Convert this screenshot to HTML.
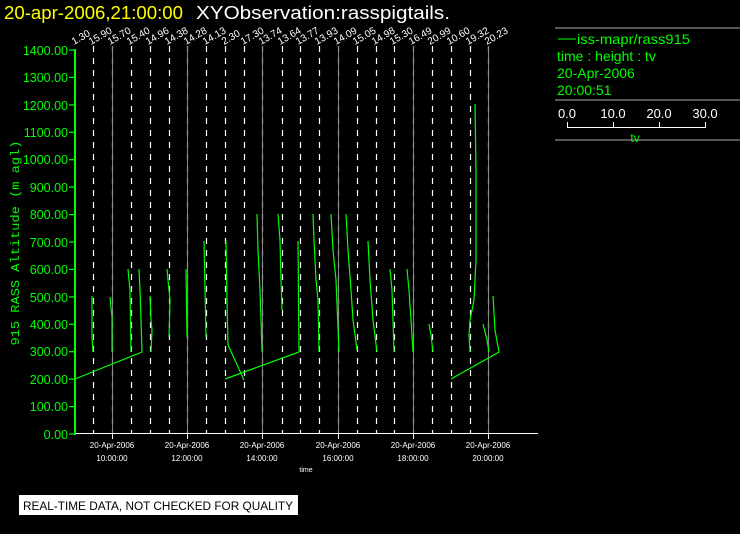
<!DOCTYPE html>
<html><head><style>
html,body{margin:0;padding:0;background:#000;}
body{width:740px;height:534px;overflow:hidden;position:relative;font-family:"Liberation Sans",sans-serif;}
</style></head><body>
<svg width="740" height="534" viewBox="0 0 740 534" xmlns="http://www.w3.org/2000/svg" style="position:absolute;left:0;top:0">
<text x="4" y="19" fill="#ffff00" font-size="18" font-family="Liberation Sans" textLength="179" lengthAdjust="spacingAndGlyphs">20-apr-2006,21:00:00</text>
<text x="196" y="19" fill="#fff" font-size="18" font-family="Liberation Sans" textLength="254" lengthAdjust="spacingAndGlyphs">XYObservation:rasspigtails.</text>

<g stroke="#fff" stroke-width="1.2" stroke-dasharray="6,6">
<line x1="93.5" y1="46" x2="93.5" y2="433"/><line x1="131.5" y1="46" x2="131.5" y2="433"/>
<line x1="150.5" y1="46" x2="150.5" y2="433"/><line x1="169.5" y1="46" x2="169.5" y2="433"/>
<line x1="206.5" y1="46" x2="206.5" y2="433"/><line x1="225.5" y1="46" x2="225.5" y2="433"/>
<line x1="244.5" y1="46" x2="244.5" y2="433"/><line x1="282.5" y1="46" x2="282.5" y2="433"/>
<line x1="300.5" y1="46" x2="300.5" y2="433"/><line x1="319.5" y1="46" x2="319.5" y2="433"/>
<line x1="357.5" y1="46" x2="357.5" y2="433"/><line x1="376.5" y1="46" x2="376.5" y2="433"/>
<line x1="394.5" y1="46" x2="394.5" y2="433"/><line x1="432.5" y1="46" x2="432.5" y2="433"/>
<line x1="451.5" y1="46" x2="451.5" y2="433"/><line x1="470.5" y1="46" x2="470.5" y2="433"/>
<line x1="112.5" y1="46" x2="112.5" y2="433"/><line x1="187.5" y1="46" x2="187.5" y2="433"/>
<line x1="262.5" y1="46" x2="262.5" y2="433"/><line x1="338.5" y1="46" x2="338.5" y2="433"/>
<line x1="413.5" y1="46" x2="413.5" y2="433"/><line x1="488.5" y1="46" x2="488.5" y2="433"/>
</g>
<g stroke="#888" stroke-width="1">
<line x1="112.5" y1="46" x2="112.5" y2="433"/><line x1="187.5" y1="46" x2="187.5" y2="433"/>
<line x1="262.5" y1="46" x2="262.5" y2="433"/><line x1="338.5" y1="46" x2="338.5" y2="433"/>
<line x1="413.5" y1="46" x2="413.5" y2="433"/><line x1="488.5" y1="46" x2="488.5" y2="433"/>
</g>

<g fill="#fff" font-size="10" font-family="Liberation Sans">
<text transform="translate(74,45) rotate(-30)">1.30</text>
<text transform="translate(91,45) rotate(-30)">15.90</text>
<text transform="translate(110,45) rotate(-30)">15.70</text>
<text transform="translate(129,45) rotate(-30)">15.40</text>
<text transform="translate(148,45) rotate(-30)">14.96</text>
<text transform="translate(167,45) rotate(-30)">14.38</text>
<text transform="translate(186,45) rotate(-30)">14.28</text>
<text transform="translate(205,45) rotate(-30)">14.13</text>
<text transform="translate(224,45) rotate(-30)">2.30</text>
<text transform="translate(243,45) rotate(-30)">17.30</text>
<text transform="translate(261,45) rotate(-30)">13.74</text>
<text transform="translate(280,45) rotate(-30)">13.64</text>
<text transform="translate(298,45) rotate(-30)">13.77</text>
<text transform="translate(317,45) rotate(-30)">13.93</text>
<text transform="translate(336,45) rotate(-30)">14.09</text>
<text transform="translate(355,45) rotate(-30)">15.05</text>
<text transform="translate(374,45) rotate(-30)">14.98</text>
<text transform="translate(392,45) rotate(-30)">15.30</text>
<text transform="translate(411,45) rotate(-30)">16.49</text>
<text transform="translate(430,45) rotate(-30)">20.99</text>
<text transform="translate(449,45) rotate(-30)">10.60</text>
<text transform="translate(468,45) rotate(-30)">19.32</text>
<text transform="translate(487,45) rotate(-30)">20.23</text>
</g>

<line x1="75" y1="433.5" x2="538" y2="433.5" stroke="#fff" stroke-width="1"/>
<g stroke="#fff" stroke-width="1">
<line x1="112.5" y1="433" x2="112.5" y2="439"/><line x1="187.5" y1="433" x2="187.5" y2="439"/>
<line x1="262.5" y1="433" x2="262.5" y2="439"/><line x1="338.5" y1="433" x2="338.5" y2="439"/>
<line x1="413.5" y1="433" x2="413.5" y2="439"/><line x1="488.5" y1="433" x2="488.5" y2="439"/>
</g>
<g fill="#fff" font-size="8" font-family="Liberation Sans" text-anchor="middle">
<text x="112" y="448">20-Apr-2006</text><text x="112" y="461">10:00:00</text>
<text x="187" y="448">20-Apr-2006</text><text x="187" y="461">12:00:00</text>
<text x="262" y="448">20-Apr-2006</text><text x="262" y="461">14:00:00</text>
<text x="338" y="448">20-Apr-2006</text><text x="338" y="461">16:00:00</text>
<text x="413" y="448">20-Apr-2006</text><text x="413" y="461">18:00:00</text>
<text x="488" y="448">20-Apr-2006</text><text x="488" y="461">20:00:00</text>
<text x="306" y="472" font-size="7">time</text>
</g>

<g stroke="#00ff00" stroke-width="2">
<line x1="75" y1="49" x2="75" y2="435"/>
</g>
<g stroke="#00ff00" stroke-width="1.2">
<line x1="69" y1="434" x2="75" y2="434"/><line x1="69" y1="406.6" x2="75" y2="406.6"/>
<line x1="69" y1="379.1" x2="75" y2="379.1"/><line x1="69" y1="351.7" x2="75" y2="351.7"/>
<line x1="69" y1="324.3" x2="75" y2="324.3"/><line x1="69" y1="296.9" x2="75" y2="296.9"/>
<line x1="69" y1="269.4" x2="75" y2="269.4"/><line x1="69" y1="242" x2="75" y2="242"/>
<line x1="69" y1="214.6" x2="75" y2="214.6"/><line x1="69" y1="187.1" x2="75" y2="187.1"/>
<line x1="69" y1="159.7" x2="75" y2="159.7"/><line x1="69" y1="132.3" x2="75" y2="132.3"/>
<line x1="69" y1="104.9" x2="75" y2="104.9"/><line x1="69" y1="77.4" x2="75" y2="77.4"/>
<line x1="69" y1="50" x2="75" y2="50"/>
</g>
<g fill="#00ff00" font-size="12.5" font-family="Liberation Sans" text-anchor="end">
<text x="68" y="439">0.00</text><text x="68" y="411">100.00</text>
<text x="68" y="384">200.00</text><text x="68" y="356">300.00</text>
<text x="68" y="329">400.00</text><text x="68" y="302">500.00</text>
<text x="68" y="274">600.00</text><text x="68" y="247">700.00</text>
<text x="68" y="219">800.00</text><text x="68" y="192">900.00</text>
<text x="68" y="164">1000.00</text><text x="68" y="137">1100.00</text>
<text x="68" y="110">1200.00</text><text x="68" y="82">1300.00</text>
<text x="68" y="55">1400.00</text>
</g>
<text transform="translate(19,243) rotate(-90)" fill="#00ff00" font-size="12" font-family="Liberation Mono" text-anchor="middle" textLength="205" lengthAdjust="spacingAndGlyphs">915 RASS Altitude (m agl)</text>

<g stroke="#00ff00" stroke-width="1.2" fill="none">
<polyline points="75,379 142,352"/>
<polyline points="92,296 92,337 93,352"/>
<polyline points="110,297 111,308 112,317 112,352"/>
<polyline points="128,269 129,280 130,290 131,352"/>
<polyline points="139,269 140,290 141,320 142,352"/>
<polyline points="150,296 151,320 152,330 151,352"/>
<polyline points="167,269 168,280 170,300 169,337"/>
<polyline points="186,269 187,337"/>
<polyline points="204,241 205,290 206,337"/>
<polyline points="226,241 227,300 228,345 244,380"/>
<polyline points="225,379 299,352"/>
<polyline points="257,214 258,250 260,290 262,352"/>
<polyline points="278,214 280,240 281,280 282,310"/>
<polyline points="298,241 299,352"/>
<polyline points="313,214 314,240 316,280 318,300 319,352"/>
<polyline points="331,214 333,250 336,280 339,352"/>
<polyline points="346,214 348,250 351,290 353,320 357,350"/>
<polyline points="368,241 370,280 373,320 377,352"/>
<polyline points="390,269 392,290 394,352"/>
<polyline points="407,269 409,290 411,320 413,352"/>
<polyline points="429,324 431,335 433,352"/>
<polyline points="475,104 476,170 476,260 474,300 470,320 469,335 470,352"/>
<polyline points="483,324 487,340 489,352"/>
<polyline points="493,296 495,330 499,352 451,379"/>
</g>

<g stroke="#888" stroke-width="1.2">
<line x1="555" y1="28" x2="740" y2="28"/><line x1="555" y1="100" x2="740" y2="100"/><line x1="555" y1="140" x2="740" y2="140"/>
</g>
<line x1="558" y1="39" x2="576" y2="39" stroke="#00ff00" stroke-width="1"/>
<g fill="#00ff00" font-size="14" font-family="Liberation Sans">
<text x="577" y="44" textLength="113" lengthAdjust="spacingAndGlyphs">iss-mapr/rass915</text>
<text x="557" y="61">time : height : tv</text>
<text x="557" y="78">20-Apr-2006</text>
<text x="557" y="95">20:00:51</text>
<text x="635" y="142" text-anchor="middle" font-size="12">tv</text>
</g>
<g fill="#fff" font-size="13" font-family="Liberation Sans" text-anchor="middle">
<text x="567" y="118">0.0</text><text x="613" y="118">10.0</text><text x="659" y="118">20.0</text><text x="705" y="118">30.0</text>
</g>
<g stroke="#fff" stroke-width="1" fill="none">
<polyline points="567.5,122 567.5,127.5 705.5,127.5 705.5,122"/>
<line x1="613.5" y1="122" x2="613.5" y2="127"/><line x1="659.5" y1="122" x2="659.5" y2="127"/>
</g>

<rect x="19" y="495" width="279" height="20" fill="#fff"/>
<text x="23" y="510" fill="#000" font-size="12" font-family="Liberation Sans" textLength="270" lengthAdjust="spacingAndGlyphs">REAL-TIME DATA, NOT CHECKED FOR QUALITY</text>
</svg>
</body></html>
